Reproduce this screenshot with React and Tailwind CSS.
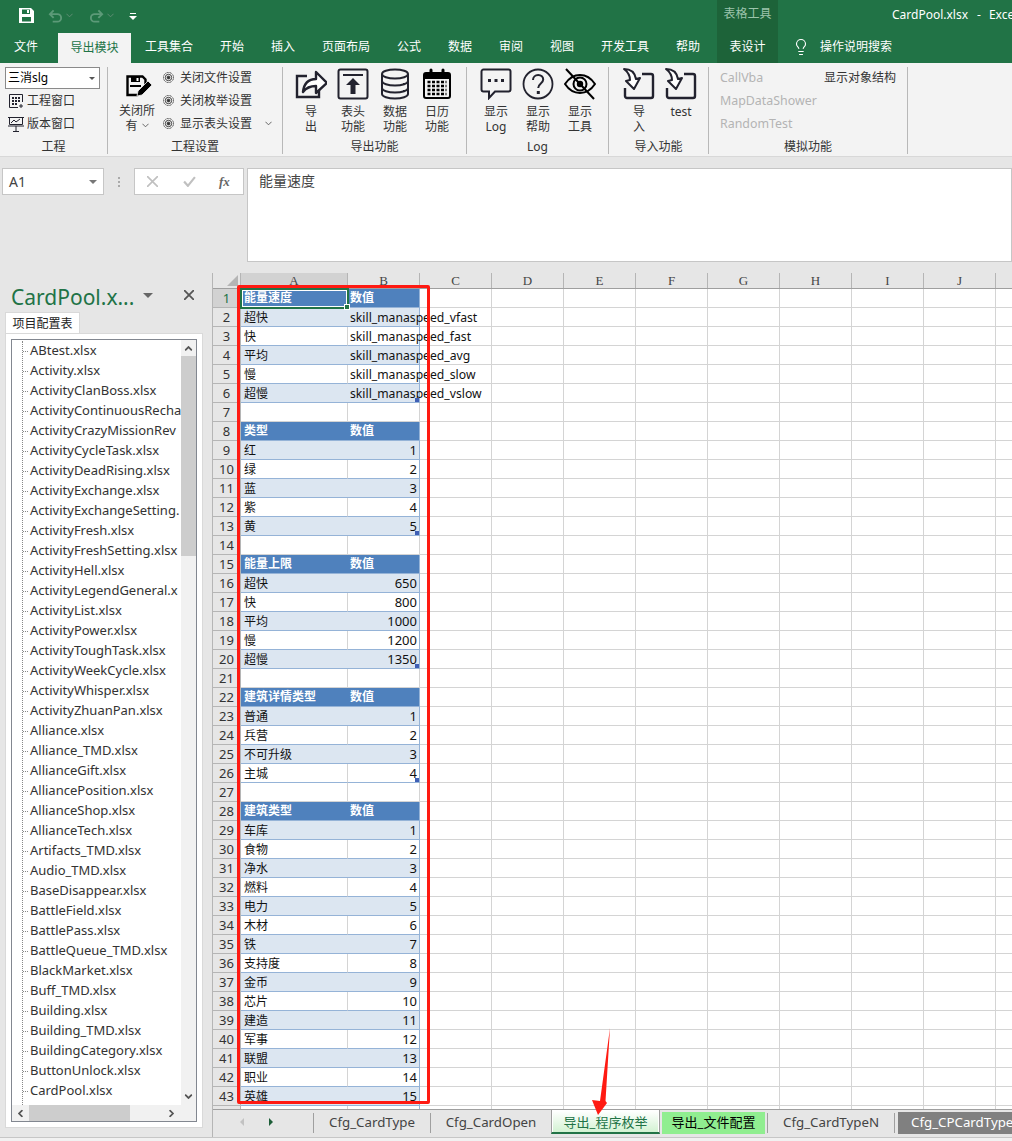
import { Lightbulb } from 'lucide-react'

const FONT = 'font-["Noto_Sans","Noto_Sans_CJK_SC",sans-serif]'

const tabs = [
  ['工具集合', 76], ['开始', 50], ['插入', 52], ['页面布局', 74], ['公式', 52],
  ['数据', 50], ['审阅', 52], ['视图', 50], ['开发工具', 76], ['帮助', 50],
]

const files = [
  'ABtest.xlsx', 'Activity.xlsx', 'ActivityClanBoss.xlsx', 'ActivityContinuousRecha', 'ActivityCrazyMissionRev',
  'ActivityCycleTask.xlsx', 'ActivityDeadRising.xlsx', 'ActivityExchange.xlsx', 'ActivityExchangeSetting.',
  'ActivityFresh.xlsx', 'ActivityFreshSetting.xlsx', 'ActivityHell.xlsx', 'ActivityLegendGeneral.x', 'ActivityList.xlsx',
  'ActivityPower.xlsx', 'ActivityToughTask.xlsx', 'ActivityWeekCycle.xlsx', 'ActivityWhisper.xlsx', 'ActivityZhuanPan.xlsx',
  'Alliance.xlsx', 'Alliance_TMD.xlsx', 'AllianceGift.xlsx', 'AlliancePosition.xlsx', 'AllianceShop.xlsx', 'AllianceTech.xlsx',
  'Artifacts_TMD.xlsx', 'Audio_TMD.xlsx', 'BaseDisappear.xlsx', 'BattleField.xlsx', 'BattlePass.xlsx', 'BattleQueue_TMD.xlsx',
  'BlackMarket.xlsx', 'Buff_TMD.xlsx', 'Building.xlsx', 'Building_TMD.xlsx', 'BuildingCategory.xlsx', 'ButtonUnlock.xlsx', 'CardPool.xlsx',
  'Cgacha',
]

// h = table header, a = banded row, b = plain row, e = empty
const rows = [
  ['h', '能量速度', '数值'], ['a', '超快', 'skill_manaspeed_vfast'], ['b', '快', 'skill_manaspeed_fast'], ['a', '平均', 'skill_manaspeed_avg'],
  ['b', '慢', 'skill_manaspeed_slow'], ['a', '超慢', 'skill_manaspeed_vslow', true], ['e'],
  ['h', '类型', '数值'], ['a', '红', 1], ['b', '绿', 2], ['a', '蓝', 3], ['b', '紫', 4], ['a', '黄', 5, true], ['e'],
  ['h', '能量上限', '数值'], ['a', '超快', 650], ['b', '快', 800], ['a', '平均', 1000], ['b', '慢', 1200], ['a', '超慢', 1350, true], ['e'],
  ['h', '建筑详情类型', '数值'], ['a', '普通', 1], ['b', '兵营', 2], ['a', '不可升级', 3], ['b', '主城', 4, true], ['e'],
  ['h', '建筑类型', '数值'], ['a', '车库', 1], ['b', '食物', 2], ['a', '净水', 3], ['b', '燃料', 4], ['a', '电力', 5], ['b', '木材', 6], ['a', '铁', 7],
  ['b', '支持度', 8], ['a', '金币', 9], ['b', '芯片', 10], ['a', '建造', 11], ['b', '军事', 12], ['a', '联盟', 13], ['b', '职业', 14], ['a', '英雄', 15],
  ['b'],
]

const extraCols = ['C', 'D', 'E', 'F', 'G', 'H', 'I', 'J', 'K']

function Icon({ children, className = 'w-8 h-8' }) {
  return <svg viewBox="0 0 32 32" fill="none" className={className}>{children}</svg>
}

const ink = '#22222e'

const icons = {
  share: (
    <Icon>
      <path d="M12 8H2v21h22v-9" stroke={ink} strokeWidth="2.4" />
      <path d="M8 24c1-9 6-13 13-13V4l11 11-11 10v-7c-6 0-10 2-13 6z" fill="#fff" stroke={ink} strokeWidth="2.4" strokeLinejoin="round" />
    </Icon>
  ),
  header: (
    <Icon>
      <rect x="1.5" y="1.5" width="29" height="29" rx="2" stroke={ink} strokeWidth="2" />
      <path d="M6 7h20" stroke={ink} strokeWidth="2" />
      <path d="M16 10l-7 7h4.500v9h5v-9H23z" fill={ink} />
    </Icon>
  ),
  database: (
    <Icon>
      <ellipse cx="16" cy="6" rx="13" ry="4.500" stroke={ink} strokeWidth="2" />
      <path d="M3 6v20c0 2.500 6 4.500 13 4.500S29 28.500 29 26V6M3 13c0 2.500 6 4.500 13 4.500S29 15.500 29 13M3 20c0 2.500 6 4.500 13 4.500S29 22.500 29 20" stroke={ink} strokeWidth="2" />
      <path d="M24 15h2v2h-2zM24 22h2v2h-2z" fill={ink} />
    </Icon>
  ),
  calendar: (
    <Icon>
      <rect x="3" y="5" width="26" height="25" rx="2" stroke="#000" strokeWidth="2" />
      <path d="M3 5h26v6H3z" fill="#000" />
      <path d="M10 2v6M22 2v6" stroke="#000" strokeWidth="3" strokeLinecap="round" />
      <path d="M6.500 14h19M6.500 18h19M6.500 22h19M6.500 26h19" stroke="#000" strokeWidth="2.500" strokeDasharray="3 1.500" />
    </Icon>
  ),
  log: (
    <Icon>
      <path d="M3.500 1.500h25a2 2 0 0 1 2 2v18a2 2 0 0 1-2 2H15l-6 6.500v-6.500H3.500a2 2 0 0 1-2-2v-18a2 2 0 0 1 2-2z" stroke={ink} strokeWidth="2" />
      <path d="M8 11h3v3H8zM14.500 11h3v3h-3zM21 11h3v3h-3z" fill={ink} />
    </Icon>
  ),
  help: (
    <Icon>
      <circle cx="16" cy="16" r="14.500" stroke={ink} strokeWidth="1.800" />
      <path d="M11 12c0-3 2.200-5 5.200-5s5 2 5 4.500c0 4-5 4-5 8.500" stroke={ink} strokeWidth="2" />
      <path d="M14.800 23h3v3h-3z" fill={ink} />
    </Icon>
  ),
  eye: (
    <Icon>
      <path d="M1 16c4-6 9-9 15-9s11 3 15 9c-4 6-9 9-15 9S5 22 1 16z" stroke="#000" strokeWidth="2" />
      <circle cx="16" cy="16" r="6.500" stroke="#000" strokeWidth="2" />
      <circle cx="16" cy="16" r="3.200" fill="#000" />
      <path d="M2 1l28 30" stroke="#000" strokeWidth="2" />
    </Icon>
  ),
  importFile: (
    <Icon>
      <path d="M19 6h9a2 2 0 0 1 2 2v20a2 2 0 0 1-2 2H4a2 2 0 0 1-2-2v-8" stroke={ink} strokeWidth="2.400" />
      <path d="M1 1c7 0 11 4 12 10l4-1-6 11-8-8 4-1C7 8 5 4 1 1z" fill="#fff" stroke={ink} strokeWidth="2" strokeLinejoin="round" />
    </Icon>
  ),
}

function SaveEdit() {
  return (
    <svg viewBox="0 0 26 22" className="ml-[4px] w-[26px] h-[22px]" fill="none">
      <path d="M1.500 1.500h15l3 3v7l-8 8.500H1.500z" stroke="#000" strokeWidth="2.400" />
      <path d="M5 2h9v5H5z" fill="#000" />
      <path d="M10.500 3h2v3h-2z" fill="#fff" />
      <path d="M4 11h11" stroke="#000" strokeWidth="2" />
      <path d="M11 21l1-5L22 6l4 4-10 10z" fill="#000" stroke="#f3f3f3" strokeWidth=".8" />
    </svg>
  )
}

function Target() {
  return (
    <svg viewBox="0 0 12 12" className="w-[11px] h-[11px] shrink-0" fill="none" stroke="#333" strokeWidth="1">
      <circle cx="6" cy="6" r="5.500" strokeDasharray="1.200 .6" />
      <circle cx="6" cy="6" r="3.500" />
      <circle cx="6" cy="6" r="1.500" fill="#333" />
    </svg>
  )
}

function Chevron({ className = '', bold = false }) {
  return (
    <svg viewBox="0 0 8 5" className={`w-[7px] h-[5px] ${className}`} fill="none" stroke="#555" strokeWidth={bold ? 1.8 : 1}>
      <path d="M.5.5L4 4 7.500.5" />
    </svg>
  )
}

function Group({ label, width, children }) {
  return (
    <div style={{ width }} className="shrink-0 h-[87px] mt-[4px] border-r border-[#b8b8b8] flex flex-col relative">
      <div className="flex-1 min-h-0 flex">{children}</div>
      <div className="h-[18px] text-center text-[12px] leading-[22px] text-[#333]">{label}</div>
    </div>
  )
}

function BigButton({ icon, lines, width = 42 }) {
  return (
    <div style={{ width }} className="shrink-0 flex flex-col items-center pt-[1px]">
      {icons[icon]}
      <div className="mt-[4px] text-center text-[12px] leading-[15px] text-[#333]">
        {lines.map((l) => <div key={l}>{l}</div>)}
      </div>
    </div>
  )
}

function Ribbon() {
  return (
    <div className="h-[94px] bg-[#f3f3f3] flex border-b border-[#d8d8d8]">
      <Group label="工程" width={108}>
        <div className="pl-[5px] flex flex-col">
          <div className="w-[95px] h-[22px] bg-white border border-[#8a8a8a] flex items-center justify-between pl-[2px] pr-[4px] text-[12px]">
            三消slg
            <span className="w-0 h-0 border-x-[3px] border-x-transparent border-t-[3px] border-t-[#555]" />
          </div>
          <div className="flex items-center h-[23px] pl-[3px] gap-[3px] text-[12px] text-[#333]">
            <svg viewBox="0 0 16 16" className="w-4 h-4" fill="none" stroke="#22222e">
              <path d="M14.500 9V1.500h-13v13H10" />
              <path d="M4 4h2v2H4zM7 4h2v2H7zM10 4h2v2h-2zM4 7h2v2H4zM7 7h2v2H7zM10 7h2v2h-2zM4 10h2v2H4zM7 10h2v2H7z" fill="#22222e" stroke="none" />
              <path d="M13 11v4M11 13h4" />
            </svg>
            工程窗口
          </div>
          <div className="flex items-center h-[23px] pl-[3px] gap-[3px] text-[12px] text-[#333]">
            <svg viewBox="0 0 16 16" className="w-4 h-4" fill="none" stroke="#22222e">
              <path d="M0 1.500h16M1.500 1.500v7h13v-7M0 10h16M8 10v6M5 15.500h6" />
              <path d="M3 7l3-3 2 2 4-3" />
            </svg>
            版本窗口
          </div>
        </div>
      </Group>
      <Group label="工程设置" width={175}>
        <div className="w-[52px] shrink-0 flex flex-col items-center pl-[6px] pt-[8px]">
          <SaveEdit />
          <div className="mt-[6px] text-center text-[12px] leading-[15px] text-[#333] whitespace-nowrap">关闭所</div>
          <div className="text-[12px] leading-[15px] text-[#333] flex items-center gap-[4px]">有<Chevron /></div>
        </div>
        <div className="pl-[3px] -mt-[1px] text-[12px] text-[#333]">
          {['关闭文件设置', '关闭枚举设置', '显示表头设置'].map((t, i) => (
            <div key={t} className="flex items-center gap-[6px] h-[23px] whitespace-nowrap">
              <Target />
              {t}
              {i === 2 && <Chevron className="ml-[7px]" />}
            </div>
          ))}
        </div>
      </Group>
      <Group label="导出功能" width={184}>
        <div className="flex pl-[7px]">
          <BigButton icon="share" lines={['导', '出']} />
          <BigButton icon="header" lines={['表头', '功能']} />
          <BigButton icon="database" lines={['数据', '功能']} />
          <BigButton icon="calendar" lines={['日历', '功能']} />
        </div>
      </Group>
      <Group label="Log" width={142}>
        <div className="flex pl-[8px]">
          <BigButton icon="log" lines={['显示', 'Log']} />
          <BigButton icon="help" lines={['显示', '帮助']} />
          <BigButton icon="eye" lines={['显示', '工具']} />
        </div>
      </Group>
      <Group label="导入功能" width={100}>
        <div className="flex pl-[9px]">
          <BigButton icon="importFile" lines={['导', '入']} />
          <BigButton icon="importFile" lines={['test']} />
        </div>
      </Group>
      <Group label="模拟功能" width={199}>
        <div className="flex pl-[11px] -mt-[1px] text-[12px]">
          <div className="w-[104px] text-[12.4px] text-[#b4b4b4]">
            <div className="h-[23px] leading-[23px]">CallVba</div>
            <div className="h-[23px] leading-[23px]">MapDataShower</div>
            <div className="h-[23px] leading-[23px]">RandomTest</div>
          </div>
          <div className="h-[23px] leading-[23px] text-[#333]">显示对象结构</div>
        </div>
      </Group>
    </div>
  )
}

function TitleBar() {
  return (
    <div className="bg-[#217346] text-white">
      <div className="h-[31px] flex items-center relative">
        <svg viewBox="0 0 15 15" className="ml-[19px] w-[15px] h-[15px]" fill="#fff">
          <path fillRule="evenodd" d="M0 0h12l3 3v12H0zM3 1.500V6h8V1.500zM3 9v4.500h9V9z M8 2h2v3H8z" />
        </svg>
        <svg viewBox="0 0 16 14" className="ml-[14px] w-[15px] h-[14px]" fill="none" stroke="#5c9a78" strokeWidth="2"><path d="M6 1L2 5l4 4M2 5h8a4 4 0 0 1 0 8H5" /></svg>
        <Chevron className="ml-[3px] opacity-50 invert" />
        <svg viewBox="0 0 16 14" className="ml-[16px] w-[15px] h-[14px]" fill="none" stroke="#5c9a78" strokeWidth="2"><path d="M10 1l4 4-4 4M14 5H6a4 4 0 0 0 0 8h5" /></svg>
        <Chevron className="ml-[3px] opacity-50 invert" />
        <svg viewBox="0 0 8 8" className="ml-[15px] w-[8px] h-[8px]" fill="#fff"><path d="M1 1h6v1H1zM0 4h8L4 8z" /></svg>
        <div className="ml-auto w-[61px] mr-[234px] h-[31px] bg-[#1d6339] text-center text-[12px] leading-[27px] text-[#9cc4ac] whitespace-nowrap">表格工具</div>
        <div className="absolute left-[892px] top-[6px] text-[12px] whitespace-nowrap">CardPool.xlsx<span className="ml-[9px] mr-[8px]">-</span>Excel</div>
      </div>
      <div className="h-[32px] flex items-stretch text-[12px]">
        <div className="w-[58px] pl-[14px] leading-[32px]">文件</div>
        <div className="w-[73px] mt-[2px] bg-[#f3f3f3] text-[#217346] text-center leading-[30px]">导出模块</div>
        {tabs.map(([t, w]) => (
          <div key={t} style={{ width: w }} className="text-center leading-[32px] shrink-0 whitespace-nowrap">{t}</div>
        ))}
        <div className="w-[61px] ml-[4px] bg-[#1d6339] text-center leading-[32px] shrink-0">表设计</div>
        <Lightbulb className="ml-[14px] mt-[7px] w-[18px] h-[18px] shrink-0" strokeWidth={1.5} />
        <div className="ml-[10px] leading-[32px] whitespace-nowrap">操作说明搜索</div>
      </div>
    </div>
  )
}

function FormulaBar() {
  return (
    <div className="h-[105px] bg-[#e6e6e6] flex pt-[11px] pl-[2px] shrink-0">
      <div className="w-[102px] h-[27px] bg-white border border-[#c6c6c6] flex items-center justify-between pl-[6px] pr-[6px] text-[14px] text-[#444]">
        A1
        <span className="w-0 h-0 border-x-[4px] border-x-transparent border-t-[4px] border-t-[#777]" />
      </div>
      <div className="w-[30px] h-[27px] flex flex-col items-center justify-center gap-[2px]">
        {[0, 1, 2].map((i) => <span key={i} className="w-[2px] h-[2px] bg-[#aaa]" />)}
      </div>
      <div className="w-[110px] h-[27px] bg-white border border-[#c6c6c6] flex items-center pl-[12px]">
        <svg viewBox="0 0 10 10" className="w-[11px] h-[11px]" stroke="#c0c0c0" strokeWidth="1.500"><path d="M0 0l10 10M10 0L0 10" /></svg>
        <svg viewBox="0 0 12 10" className="ml-[25px] w-[13px] h-[11px]" fill="none" stroke="#c0c0c0" strokeWidth="2"><path d="M1 5l3.500 4L11 1" /></svg>
        <span className="ml-[23px] font-['Liberation_Serif',serif] italic text-[13px] font-bold text-[#666]">fx</span>
      </div>
      <div className="ml-[3px] flex-1 h-[94px] bg-white border border-[#c6c6c6] pl-[11px] pt-[1px] text-[14px] text-[#444]">能量速度</div>
    </div>
  )
}

function Sidebar() {
  return (
    <div className="w-[212px] shrink-0 bg-[#e6e6e6] pl-[5px] flex flex-col">
      <div className="h-[52px] flex items-start pt-[21px] pl-[6px] relative">
        <span className="text-[21px] leading-[28px] text-[#217346] whitespace-nowrap">CardPool.x...</span>
        <span className="absolute left-[138px] top-[31px] w-0 h-0 border-x-[5px] border-x-transparent border-t-[5px] border-t-[#666]" />
        <svg viewBox="0 0 10 10" className="absolute left-[179px] top-[28px] w-[10px] h-[10px]" stroke="#555" strokeWidth="1.800"><path d="M0 0l10 10M10 0L0 10" /></svg>
      </div>
      <div className="w-[75px] h-[21px] bg-white text-[12px] text-center leading-[21px] text-[#222] border-t border-x border-[#d9d9d9] -mt-[2px]">项目配置表</div>
      <div className="w-[198px] flex-1 min-h-0 bg-white border border-[#d9d9d9] mb-[9px] p-[5px] flex">
        <div className="flex-1 min-w-0 border border-[#828790] flex flex-col">
          <div className="flex-1 min-h-0 flex">
            <div className="flex-1 min-w-0 overflow-hidden pl-[10px]">
              <div className="border-l border-dotted border-[#888] mt-[1px]">
                {files.map((f) => (
                  <div key={f} className="h-[20px] flex items-center text-[13px] text-[#333] whitespace-nowrap">
                    <span className="w-[5px] shrink-0 border-t border-dotted border-[#888] mr-[2px]" />
                    {f}
                  </div>
                ))}
              </div>
            </div>
            <div className="w-[15px] shrink-0 bg-[#f1f1f1] flex flex-col items-center">
              <Chevron bold className="mt-[6px] rotate-180 scale-110" />
              <div className="w-full h-[200px] bg-[#cdcdcd] mt-[5px]" />
              <Chevron bold className="mt-auto mb-[6px] scale-110" />
            </div>
          </div>
          <div className="h-[16px] bg-[#f1f1f1] flex items-center shrink-0">
            <Chevron bold className="ml-[5px] rotate-90 scale-110" />
            <div className="ml-[5px] w-[101px] h-full bg-[#cdcdcd]" />
            <Chevron bold className="ml-[38px] -rotate-90 scale-110" />
          </div>
        </div>
      </div>
    </div>
  )
}

function Sheet() {
  return (
    <div className="flex-1 min-w-0 overflow-hidden bg-white relative">
      {/* column header */}
      <div className="flex h-[16px] bg-[#e6e6e6] border-b border-[#9f9f9f] text-[13px] text-[#444] font-['Liberation_Serif',serif]">
        <div className="w-[28px] shrink-0 border-r border-[#b5b5b5] relative">
          <svg viewBox="0 0 11 11" className="absolute right-[2px] bottom-[2px] w-[11px] h-[11px]"><path d="M11 0v11H0z" fill="#b5b5b5" /></svg>
        </div>
        <div className="w-[107px] shrink-0 bg-[#d2d2d2] border-r border-[#b5b5b5] text-center leading-[16px]">A</div>
        <div className="w-[72px] shrink-0 border-r border-[#b5b5b5] text-center leading-[16px]">B</div>
        {extraCols.map((c) => (
          <div key={c} className="w-[72px] shrink-0 border-r border-[#b5b5b5] text-center leading-[16px]">{c}</div>
        ))}
      </div>
      {rows.map(([kind, a, b, corner], i) => {
        const rowBg = kind === 'h' ? 'bg-[#4f81bd] text-white font-semibold' : kind === 'a' ? 'bg-[#dce6f1] text-[#111]' : 'bg-white text-[#111]'
        const edge = kind === 'e' ? 'border-[#d4d4d4]' : 'border-[#95b3d7]'
        const divider = kind === 'a' || kind === 'h' ? '' : 'border-r border-r-[#d4d4d4]'
        const side = kind === 'e' ? 'border-r border-r-[#d4d4d4]' : 'border-r border-r-[#95b3d7]'
        const bFormat = typeof b === 'number'
          ? 'text-right pr-[2px] text-[13px]'
          : kind === 'h' ? 'pl-[2px]' : 'pl-[2px] pt-[1px] text-[12.2px]'
        return (
          <div key={i} className="flex h-[19px] text-[12px] leading-[18px]">
            <div className={`w-[28px] shrink-0 border-r border-b border-[#b5b5b5] text-center text-[13px] ${i === 0 ? 'bg-[#d2d2d2] text-[#217346]' : 'bg-[#e6e6e6] text-[#333]'}`}>{i < 43 ? i + 1 : ''}</div>
            <div className={`w-[107px] shrink-0 border-b ${edge} ${divider} ${rowBg} pl-[3px] ${kind === 'h' ? '' : 'pt-[1px]'}`}>{a}</div>
            <div className={`w-[72px] shrink-0 border-b ${edge} ${side} ${rowBg} relative whitespace-nowrap ${bFormat}`}>
              {b}
              {corner && <span className="absolute right-0 bottom-0 w-[4px] h-[4px] bg-[#3f5fb5]" />}
            </div>
            {extraCols.map((c) => (
              <div key={c} className="w-[72px] shrink-0 border-r border-b border-[#d4d4d4]" />
            ))}
          </div>
        )
      })}
      {/* selected cell */}
      <div className="absolute left-[27px] top-[15px] w-[109px] h-[21px] border-2 border-[#217346] pointer-events-none">
        <div className="w-full h-full border border-white" />
        <span className="absolute -right-[3px] -bottom-[3px] w-[4px] h-[4px] bg-[#217346] border border-white box-content" />
      </div>
      {/* red annotation */}
      <div className="absolute left-[24px] top-[12px] w-[193px] h-[819px] border-[3px] border-[#ff1a12] rounded-[2px] pointer-events-none" />
    </div>
  )
}

function SheetTabs() {
  return (
    <div className="h-[28px] shrink-0 bg-[#e6e6e6] border-t border-[#9f9f9f] flex text-[13.3px] text-[#444]">
      <div className="w-[100px] shrink-0 flex items-center pl-[27px] gap-[25px] pb-[3px]">
        <span className="w-0 h-0 border-y-[4px] border-y-transparent border-r-[4px] border-r-[#c2c2c2]" />
        <span className="w-0 h-0 border-y-[4px] border-y-transparent border-l-[4px] border-l-[#1d5e38]" />
      </div>
      <div className="w-[117px] shrink-0 mt-[3px] mb-[4px] border-l border-[#9f9f9f] text-center leading-[19px] whitespace-nowrap">Cfg_CardType</div>
      <div className="w-[121px] shrink-0 mt-[3px] mb-[4px] border-l border-[#9f9f9f] text-center leading-[19px] whitespace-nowrap">Cfg_CardOpen</div>
      <div className="w-[109px] shrink-0 -mt-px mb-[3px] bg-white p-[1px] pb-0 border-x border-t border-[#9f9f9f] border-b-2 border-b-[#217346]">
        <div className="h-full bg-gradient-to-b from-white to-[#d2f2d2] text-center text-[13px] text-[#217346] leading-[22px] whitespace-nowrap">导出_程序枚举</div>
      </div>
      <div className="w-[103px] shrink-0 ml-[2px] mt-[2px] mb-[3px] bg-[#90ee90] text-center text-[13px] text-black leading-[21px] whitespace-nowrap">导出_文件配置</div>
      <div className="w-[128px] shrink-0 ml-[2px] mt-[3px] mb-[4px] border-x border-[#9f9f9f] text-center leading-[19px] whitespace-nowrap">Cfg_CardTypeN</div>
      <div className="flex-1 min-w-0 ml-[3px] mt-[2px] mb-[3px] bg-[#808080] text-white pl-[13px] leading-[21px] whitespace-nowrap overflow-hidden">Cfg_CPCardType</div>
    </div>
  )
}

export default function App() {
  return (
    <div className={`w-[1012px] h-[1141px] overflow-hidden flex flex-col bg-[#e6e6e6] relative ${FONT}`}>
      <TitleBar />
      <Ribbon />
      <FormulaBar />
      <div className="flex-1 min-h-0 flex">
        <Sidebar />
        <div className="flex-1 min-w-0 flex flex-col pt-[11px]">
          <div className="flex-1 min-h-0 flex flex-col border-l border-[#b5b5b5]">
            <Sheet />
            <SheetTabs />
          </div>
        </div>
      </div>
      <div className="h-[4px] shrink-0 bg-[#f1f1f1] border-t border-[#c6c6c6]" />
      {/* red arrow */}
      <svg viewBox="0 0 20 90" className="absolute left-[590px] top-[1027px] w-[20px] h-[90px]">
        <path d="M20 1L15.500 74 17 76 8 88 2 73l8 1z" fill="#ff1a12" />
      </svg>
    </div>
  )
}
